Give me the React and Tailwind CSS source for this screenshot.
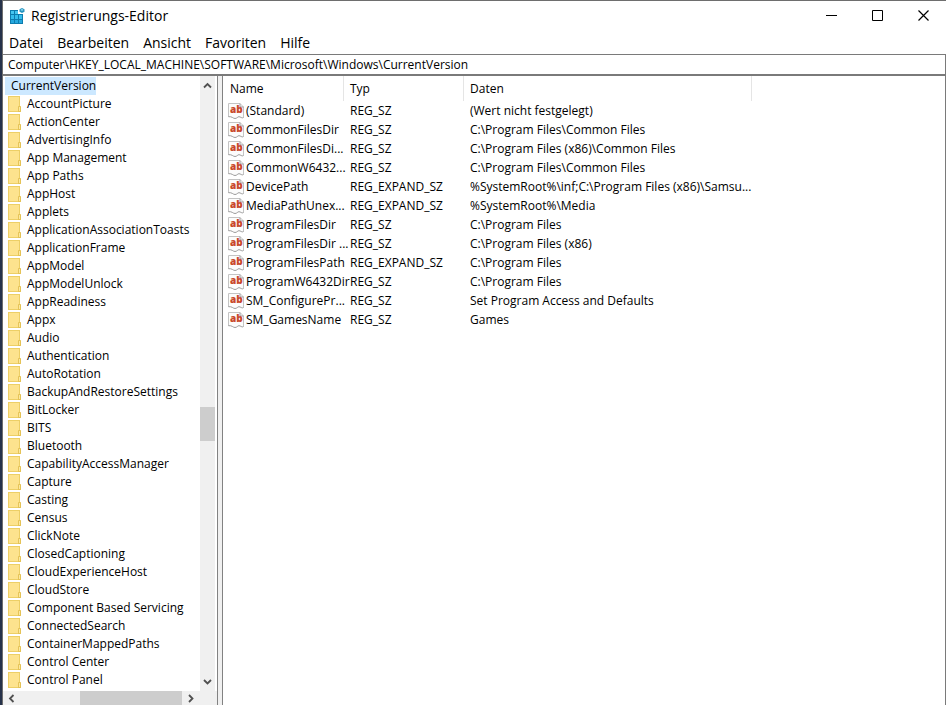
import { useState } from "react";

const menus = ["Datei", "Bearbeiten", "Ansicht", "Favoriten", "Hilfe"];

const keys = [
  "AccountPicture",
  "ActionCenter",
  "AdvertisingInfo",
  "App Management",
  "App Paths",
  "AppHost",
  "Applets",
  "ApplicationAssociationToasts",
  "ApplicationFrame",
  "AppModel",
  "AppModelUnlock",
  "AppReadiness",
  "Appx",
  "Audio",
  "Authentication",
  "AutoRotation",
  "BackupAndRestoreSettings",
  "BitLocker",
  "BITS",
  "Bluetooth",
  "CapabilityAccessManager",
  "Capture",
  "Casting",
  "Census",
  "ClickNote",
  "ClosedCaptioning",
  "CloudExperienceHost",
  "CloudStore",
  "Component Based Servicing",
  "ConnectedSearch",
  "ContainerMappedPaths",
  "Control Center",
  "Control Panel",
];

const values = [
  { name: "(Standard)", type: "REG_SZ", data: "(Wert nicht festgelegt)" },
  { name: "CommonFilesDir", type: "REG_SZ", data: "C:\\Program Files\\Common Files" },
  { name: "CommonFilesDi...", type: "REG_SZ", data: "C:\\Program Files (x86)\\Common Files" },
  { name: "CommonW6432...", type: "REG_SZ", data: "C:\\Program Files\\Common Files" },
  { name: "DevicePath", type: "REG_EXPAND_SZ", data: "%SystemRoot%\\inf;C:\\Program Files (x86)\\Samsu..." },
  { name: "MediaPathUnex...", type: "REG_EXPAND_SZ", data: "%SystemRoot%\\Media" },
  { name: "ProgramFilesDir", type: "REG_SZ", data: "C:\\Program Files" },
  { name: "ProgramFilesDir ...", type: "REG_SZ", data: "C:\\Program Files (x86)" },
  { name: "ProgramFilesPath", type: "REG_EXPAND_SZ", data: "C:\\Program Files" },
  { name: "ProgramW6432Dir", type: "REG_SZ", data: "C:\\Program Files" },
  { name: "SM_ConfigurePr...", type: "REG_SZ", data: "Set Program Access and Defaults" },
  { name: "SM_GamesName", type: "REG_SZ", data: "Games" },
];

const RegeditIcon = () => (
  <svg width="17" height="16" viewBox="0 0 17 16" className="shrink-0">
    <path d="M2 2h8v4h5v10H2z" fill="#0d7cae" />
    <path d="M3 3h3v3H3zM7 3h3v3H7z" fill="#45c6f0" />
    <path d="M3 7h3v4H3zM7 7h3v4H7zM11 7h3v4h-3z" fill="#35bdec" />
    <path d="M3 12h3v3H3zM7 12h3v3H7zM11 12h3v3h-3z" fill="#25a8de" />
    <path d="M14 0l2.500 1.300v2.500L14 5l-2.500-1.200V1.300z" fill="#2794bf" />
    <path d="M14 1l1.500.9L14 2.800l-1.500-.9z" fill="#a5e5fa" />
  </svg>
);

const FolderIcon = () => (
  <svg width="13" height="16" viewBox="0 0 13 16" className="shrink-0">
    <path d="M0 0h12v10.500h1V16H0z" fill="#edcf66" />
    <path d="M1 1h10v14H1z" fill="#fde38e" />
    <path d="M10.500 10.500h2v5h-2z" fill="#fbe9a0" stroke="#dfbb4a" strokeWidth=".8" />
  </svg>
);

const StringIcon = () => (
  <svg width="16" height="16" viewBox="0 0 16 16" className="shrink-0 overflow-visible">
    <path
      d="M.5.5h11.500l3.500 3.500v10.500c-1.500 1.200-3-.8-4.500-.8s-2 1.800-4 1.800-3-2-6.500-1.500z"
      fill="#fcfcfc"
    />
    <path d="M.5 14V.5H12L15.500 4v10.500" fill="none" stroke="#c4c4c4" />
    <path d="M.5 13.700c3.500-.5 4.500 1.800 6.500 1.800s2.500-1.800 4-1.800 3 2 4.500.8M12 .5V4h3.500" fill="none" stroke="#9c9c9c" />
    <text x="2" y="10" fontSize="10" fontWeight="800" fill="#c9482b">
      ab
    </text>
  </svg>
);

const Arrow = ({ d }) => (
  <svg width="9" height="9" viewBox="0 0 9 9" fill="none" stroke="#505050" strokeWidth="1.800">
    <path d={d} />
  </svg>
);

const TitleBar = () => (
  <header className="flex h-[29px] items-center pl-[5px]">
    <RegeditIcon />
    <h1 className="ml-1.5 flex-1 text-sm leading-5">Registrierungs-Editor</h1>
    <button aria-label="Minimieren" className="flex h-7 w-[46px] items-center justify-center">
      <svg width="11" height="11" viewBox="0 0 11 11" stroke="#000">
        <path d="M0 5.500h11" />
      </svg>
    </button>
    <button aria-label="Maximieren" className="flex h-7 w-[46px] items-center justify-center">
      <svg width="11" height="11" viewBox="0 0 11 11" fill="none" stroke="#000">
        <path d="M.5.5h10v10H.5z" />
      </svg>
    </button>
    <button aria-label="Schließen" className="flex h-7 w-[46px] items-center justify-center">
      <svg width="11" height="11" viewBox="0 0 11 11" stroke="#000" strokeWidth="1.200">
        <path d="M.5.5l10 10M10.500.5l-10 10" />
      </svg>
    </button>
  </header>
);

const KeyTree = ({ selected, onSelect }) => (
  <nav className="flex w-[214px] shrink-0 flex-col">
    <div className="flex flex-1">
      <ul className="min-w-0 flex-1 pt-px pb-0.5 pl-0.5">
        <li className="flex h-[18px]">
          <button
            onClick={() => onSelect("CurrentVersion")}
            className={`pl-1.5 leading-[18px] ${selected === "CurrentVersion" ? "bg-[#cce8ff]" : ""}`}
          >
            CurrentVersion
          </button>
        </li>
        {keys.map((key) => (
          <li key={key} className="flex h-[18px] items-center pl-[3px]">
            <FolderIcon />
            <button
              onClick={() => onSelect(key)}
              className={`ml-1 truncate px-0.5 leading-[18px] ${selected === key ? "bg-[#cce8ff]" : ""}`}
            >
              {key}
            </button>
          </li>
        ))}
      </ul>

      {/* Vertical scrollbar */}
      <div className="mr-0.5 flex w-[15px] flex-col items-center bg-[#f0f0f0] py-[5px]">
        <Arrow d="M1 6.500L4.500 3L8 6.500" />
        <div className="flex w-full flex-1 flex-col">
          <div className="grow-[316]"></div>
          <div className="h-[34px] bg-[#cdcdcd]"></div>
          <div className="grow-[236]"></div>
        </div>
        <Arrow d="M1 3L4.500 6.500L8 3" />
      </div>
    </div>

    {/* Horizontal scrollbar */}
    <div className="flex h-3.5 items-center bg-[#f0f0f0] pr-[22px] pl-1">
      <Arrow d="M6.500 1L3 4.500L6.500 8" />
      <div className="flex h-full flex-1 justify-end pr-1">
        <div className="w-[102px] bg-[#cdcdcd]"></div>
      </div>
      <Arrow d="M3 1L6.500 4.500L3 8" />
    </div>
  </nav>
);

const ValueTable = () => (
  <main className="min-w-0 flex-1">
    <table className="w-full table-fixed border-separate border-spacing-0 text-left">
      <colgroup>
        <col className="w-[121px]" />
        <col className="w-[120px]" />
        <col className="w-[288px]" />
        <col />
      </colgroup>
      <thead>
        <tr className="h-[25px]">
          <th className="border-r border-[#e5e5e5] pl-[7px] font-normal">Name</th>
          <th className="border-r border-[#e5e5e5] pl-1.5 font-normal">Typ</th>
          <th className="border-r border-[#e5e5e5] pl-1.5 font-normal">Daten</th>
          <td></td>
        </tr>
      </thead>
      <tbody>
        {values.map((value) => (
          <tr key={value.name} className="h-[19px] leading-[19px] whitespace-nowrap">
            <td className="p-0">
              <div className="flex items-center gap-0.5 pl-[5px]">
                <StringIcon />
                {value.name}
              </div>
            </td>
            <td className="py-0 pl-1.5">{value.type}</td>
            <td className="py-0 pl-1.5">{value.data}</td>
            <td></td>
          </tr>
        ))}
      </tbody>
    </table>
  </main>
);

const App = () => {
  const [selected, setSelected] = useState("CurrentVersion");
  const [path, setPath] = useState(
    "Computer\\HKEY_LOCAL_MACHINE\\SOFTWARE\\Microsoft\\Windows\\CurrentVersion"
  );

  return (
    <div className="min-h-screen bg-[#26324a] pl-0.5 font-['Open_Sans',sans-serif] text-xs text-black">
      <div className="flex min-h-screen flex-col border-t border-l border-[#6e6e6e] bg-white">
        <TitleBar />

        <nav className="flex h-6 items-center gap-3.5 pt-0.5 pl-1.5 text-sm leading-5">
          {menus.map((menu) => (
            <button key={menu}>{menu}</button>
          ))}
        </nav>

        <input
          type="text"
          aria-label="Adresse"
          value={path}
          onChange={(e) => setPath(e.target.value)}
          className="h-[22px] w-full border-t border-r border-b-2 border-[#7a7a7a] px-[5px] outline-none"
        />

        <div className="flex flex-1 border-r border-[#7a7a7a]">
          <KeyTree selected={selected} onSelect={setSelected} />
          <div className="w-1.5 shrink-0 cursor-col-resize border-x border-[#828282] bg-[#f0f0f0]"></div>
          <ValueTable />
        </div>
      </div>
    </div>
  );
};

export default App;
